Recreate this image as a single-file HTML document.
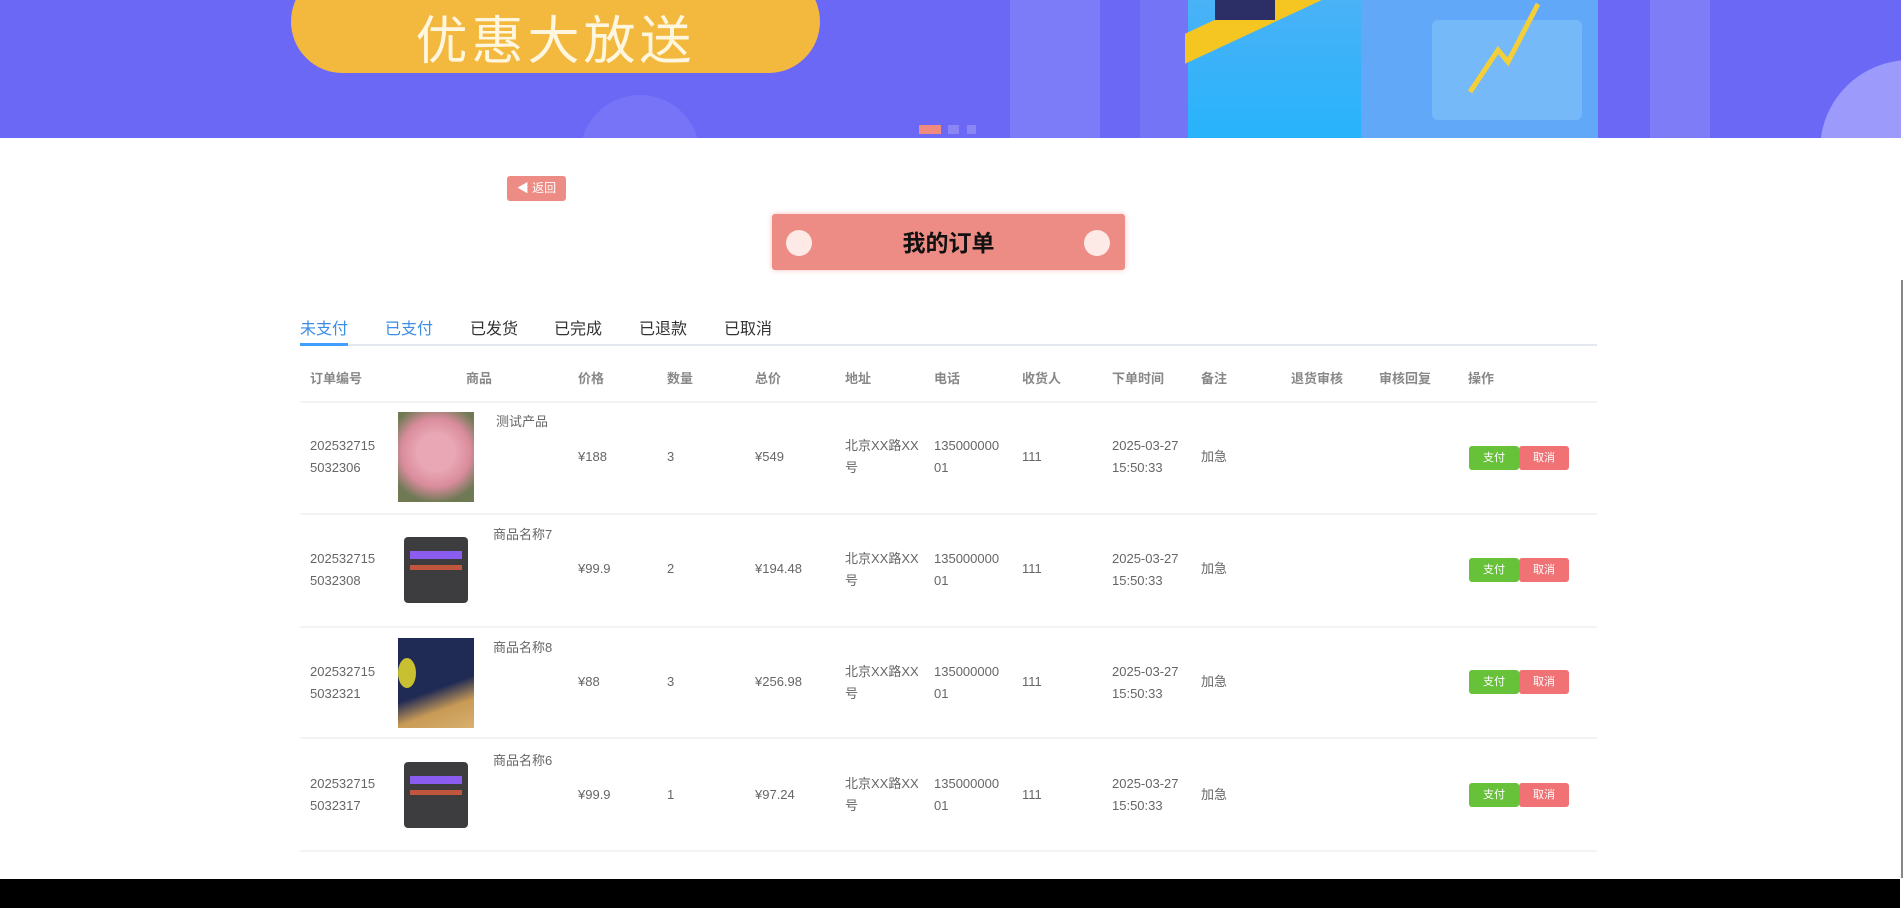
<!DOCTYPE html>
<html><head><meta charset="utf-8"><style>
*{margin:0;padding:0;box-sizing:border-box}
body{width:1904px;height:908px;overflow:hidden;background:#fff;font-family:"Liberation Sans","Noto Sans CJK SC",sans-serif;position:relative;color:#555}
.a{position:absolute}
.banner{left:0;top:0;width:1901px;height:138px;background:#6b68f6;overflow:hidden}
.pill{left:291px;top:-30px;width:529px;height:103px;border-radius:52px;background:#f3b83e}
.pill span{position:absolute;left:0;right:0;bottom:6px;text-align:center;color:#fff6e0;font-size:52px;line-height:60px;letter-spacing:4px;font-family:"Noto Sans CJK SC",sans-serif}
.hd{top:370px;font-size:13px;color:#888;font-weight:bold;line-height:18px}
.c{font-size:13px;color:#666;line-height:22px}
.line{left:300px;width:1297px;height:2px;background:#f3f3f3}
.btn{width:50px;height:24px;color:#fff;font-size:11px;text-align:center;line-height:24px;border-radius:3px}
.tab{top:315px;font-size:16px;color:#333}
</style></head><body>
<div class="a banner">
  <div class="a" style="left:1010px;top:0;width:90px;height:138px;background:#7d7cf8"></div>
  <div class="a" style="left:1140px;top:0;width:60px;height:138px;background:#7474f7"></div>
  <div class="a" style="left:1188px;top:0;width:175px;height:138px;background:linear-gradient(180deg,#4ab2f7,#27b3fb)"></div>
  <div class="a" style="left:1361px;top:0;width:237px;height:138px;background:#62a8f8"></div>
  <div class="a" style="left:1432px;top:20px;width:150px;height:100px;background:#7ec0fa;border-radius:6px;opacity:.7"></div>
  <div class="a" style="left:1185px;top:0;width:145px;height:30px;background:#f5c622;transform:skewY(-25deg)"></div>
  <div class="a" style="left:1215px;top:0;width:60px;height:20px;background:#2b2f66"></div>
  <svg class="a" style="left:1450px;top:0" width="140" height="100"><polyline points="20,92 48,50 58,62 88,4" fill="none" stroke="#f4cf38" stroke-width="5"/></svg>
  <div class="a" style="left:1650px;top:0;width:60px;height:138px;background:#7f7cf8"></div>
  <div class="a" style="left:1820px;top:60px;width:180px;height:180px;border-radius:50%;background:#9c9afa"></div>
  <div class="a" style="left:580px;top:95px;width:120px;height:120px;border-radius:50%;background:#7774f8"></div>
  <div class="a pill"><span>优惠大放送</span></div>
  <div class="a" style="left:919px;top:125px;width:22px;height:9px;background:#ef8a7f"></div>
  <div class="a" style="left:948px;top:125px;width:11px;height:9px;background:#8a86f4"></div>
  <div class="a" style="left:967px;top:125px;width:9px;height:9px;background:#8a86f4"></div>
</div>
<div class="a" style="left:1901px;top:280px;width:2px;height:598px;background:#888"></div>
<div class="a" style="left:507px;top:176px;width:59px;height:25px;background:#ec8c84;border-radius:3px;color:#fff;font-size:12px;line-height:25px;text-align:center">&#9664;&#xFE0E; 返回</div>
<div class="a" style="left:772px;top:214px;width:353px;height:56px;background:#ec8c84;border-radius:3px;box-shadow:0 0 6px #f4c4c0"></div>
<div class="a" style="left:786px;top:230px;width:26px;height:26px;border-radius:50%;background:#fdeae6"></div>
<div class="a" style="left:1084px;top:230px;width:26px;height:26px;border-radius:50%;background:#fdeae6"></div>
<div class="a" style="left:772px;top:228px;width:353px;text-align:center;font-size:23px;font-weight:bold;color:#111;line-height:30px">我的订单</div>

<div class="a tab" style="left:300px;color:#3a8ee6">未支付</div>
<div class="a tab" style="left:385px;color:#3a8ee6">已支付</div>
<div class="a tab" style="left:470px">已发货</div>
<div class="a tab" style="left:554px">已完成</div>
<div class="a tab" style="left:639px">已退款</div>
<div class="a tab" style="left:724px">已取消</div>
<div class="a" style="left:300px;top:344px;width:1297px;height:2px;background:#e4e7ed"></div>
<div class="a" style="left:300px;top:343px;width:48px;height:3px;background:#409eff"></div>

<div class="a hd" style="left:310px">订单编号</div><div class="a hd" style="left:466px">商品</div>
<div class="a hd" style="left:578px">价格</div><div class="a hd" style="left:667px">数量</div>
<div class="a hd" style="left:755px">总价</div><div class="a hd" style="left:845px">地址</div>
<div class="a hd" style="left:934px">电话</div><div class="a hd" style="left:1022px">收货人</div>
<div class="a hd" style="left:1112px">下单时间</div><div class="a hd" style="left:1201px">备注</div>
<div class="a hd" style="left:1291px">退货审核</div><div class="a hd" style="left:1379px">审核回复</div>
<div class="a hd" style="left:1468px">操作</div>

<div class="a line" style="top:401px"></div>
<div class="a line" style="top:513px"></div>
<div class="a line" style="top:626px"></div>
<div class="a line" style="top:737px"></div>
<div class="a line" style="top:850px"></div>

<div class="a c" style="left:310px;top:435px">202532715<br>5032306</div>
<div class="a" style="left:398px;top:412px;width:76px;height:90px;background:radial-gradient(circle at 50% 45%,#e9a6b4 30%,#d98c9c 55%,#6f7a55 80%)"></div>
<div class="a c" style="left:496px;top:411px">测试产品</div>
<div class="a c" style="left:578px;top:446px">¥188</div><div class="a c" style="left:667px;top:446px">3</div>
<div class="a c" style="left:755px;top:446px">¥549</div>
<div class="a c" style="left:845px;top:435px">北京XX路XX<br>号</div>
<div class="a c" style="left:934px;top:435px">135000000<br>01</div>
<div class="a c" style="left:1022px;top:446px">111</div>
<div class="a c" style="left:1112px;top:435px">2025-03-27<br>15:50:33</div>
<div class="a c" style="left:1201px;top:446px">加急</div>
<div class="a btn" style="left:1469px;top:446px;background:#67c23a">支付</div>
<div class="a btn" style="left:1519px;top:446px;background:#f07275">取消</div>

<div class="a c" style="left:310px;top:548px">202532715<br>5032308</div>
<div class="a" style="left:404px;top:537px;width:64px;height:66px;background:#3d3d40;border-radius:4px"><div style="margin:14px 6px 0;height:8px;background:#8b5cf0"></div><div style="margin:6px 6px 0;height:5px;background:#c0563c"></div></div>
<div class="a c" style="left:493px;top:524px">商品名称7</div>
<div class="a c" style="left:578px;top:558px">¥99.9</div><div class="a c" style="left:667px;top:558px">2</div>
<div class="a c" style="left:755px;top:558px">¥194.48</div>
<div class="a c" style="left:845px;top:548px">北京XX路XX<br>号</div>
<div class="a c" style="left:934px;top:548px">135000000<br>01</div>
<div class="a c" style="left:1022px;top:558px">111</div>
<div class="a c" style="left:1112px;top:548px">2025-03-27<br>15:50:33</div>
<div class="a c" style="left:1201px;top:558px">加急</div>
<div class="a btn" style="left:1469px;top:558px;background:#67c23a">支付</div>
<div class="a btn" style="left:1519px;top:558px;background:#f07275">取消</div>

<div class="a c" style="left:310px;top:661px">202532715<br>5032321</div>
<div class="a" style="left:398px;top:638px;width:76px;height:90px;background:linear-gradient(160deg,#1f2a55 55%,#c89a55 75%,#d8b070)"><div style="position:absolute;left:0;top:20px;width:18px;height:30px;background:#c8c030;border-radius:50%"></div></div>
<div class="a c" style="left:493px;top:637px">商品名称8</div>
<div class="a c" style="left:578px;top:671px">¥88</div><div class="a c" style="left:667px;top:671px">3</div>
<div class="a c" style="left:755px;top:671px">¥256.98</div>
<div class="a c" style="left:845px;top:661px">北京XX路XX<br>号</div>
<div class="a c" style="left:934px;top:661px">135000000<br>01</div>
<div class="a c" style="left:1022px;top:671px">111</div>
<div class="a c" style="left:1112px;top:661px">2025-03-27<br>15:50:33</div>
<div class="a c" style="left:1201px;top:671px">加急</div>
<div class="a btn" style="left:1469px;top:670px;background:#67c23a">支付</div>
<div class="a btn" style="left:1519px;top:670px;background:#f07275">取消</div>

<div class="a c" style="left:310px;top:773px">202532715<br>5032317</div>
<div class="a" style="left:404px;top:762px;width:64px;height:66px;background:#3d3d40;border-radius:4px"><div style="margin:14px 6px 0;height:8px;background:#8b5cf0"></div><div style="margin:6px 6px 0;height:5px;background:#c0563c"></div></div>
<div class="a c" style="left:493px;top:750px">商品名称6</div>
<div class="a c" style="left:578px;top:784px">¥99.9</div><div class="a c" style="left:667px;top:784px">1</div>
<div class="a c" style="left:755px;top:784px">¥97.24</div>
<div class="a c" style="left:845px;top:773px">北京XX路XX<br>号</div>
<div class="a c" style="left:934px;top:773px">135000000<br>01</div>
<div class="a c" style="left:1022px;top:784px">111</div>
<div class="a c" style="left:1112px;top:773px">2025-03-27<br>15:50:33</div>
<div class="a c" style="left:1201px;top:784px">加急</div>
<div class="a btn" style="left:1469px;top:783px;background:#67c23a">支付</div>
<div class="a btn" style="left:1519px;top:783px;background:#f07275">取消</div>

<div class="a" style="left:0;top:879px;width:1900px;height:29px;background:#000"></div>
</body></html>
